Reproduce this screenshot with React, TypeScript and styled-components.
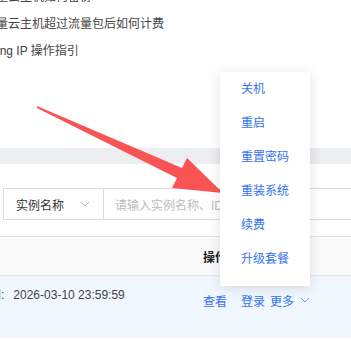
import styled, { createGlobalStyle } from 'styled-components';

const GlobalStyle = createGlobalStyle`
    html, body {
        margin: 0;
        padding: 0;
        background: #fff;
        overflow: hidden;
    }
    body {
        font-family: "Liberation Sans", "Noto Sans CJK SC", sans-serif;
        font-size: 12px;
        color: #333;
    }
`

const Page = styled.div`
    position: relative;
    width: 351px;
    height: 339px;
    overflow: hidden;
`

const HelpList = styled.ul`
    list-style: none;
    margin: -16px 0 0;
    padding: 0;
    height: 81px;
`

const HelpItem = styled.li<{ $shift: number }>`
    line-height: 27px;
    white-space: nowrap;
    color: #444;
    margin-left: ${p => p.$shift}px;
`

const Band = styled.div`
    margin-top: 83px;
    height: 16px;
    background: #ebedf1;
`

const Filter = styled.div`
    padding: 24px 0 16px 3px;
    border-bottom: 1px solid #e4e4e4;
`

const SearchBox = styled.div`
    display: flex;
    width: 420px;
    height: 30px;
    border: 1px solid #dcdcdc;
`

const SelectPart = styled.div`
    display: flex;
    align-items: center;
    justify-content: space-between;
    width: 100px;
    padding: 0 13px 0 12px;
    box-sizing: border-box;
    border-right: 1px solid #dcdcdc;
    color: #333;
`

const SearchInput = styled.div`
    display: flex;
    align-items: center;
    padding-left: 11px;
    color: #bbb;
    white-space: nowrap;
`

const HeadRow = styled.div`
    display: flex;
    align-items: center;
    height: 38px;
    padding-left: 203px;
    background: #fafafa;
    border-bottom: 1px solid #e6e6e6;
    font-weight: bold;
    color: #222;
`

const DataRow = styled.div`
    display: flex;
    height: 62px;
    background: #f0f7ff;
    margin-left: -47px;
`

const ExpireCell = styled.div`
    width: 250px;
    padding-top: 11px;
    line-height: 16px;
    color: #444;
    white-space: nowrap;
`

const DateText = styled.span`
    margin-left: 9px;
`

const Actions = styled.div`
    display: flex;
    align-items: center;
    height: 16px;
    margin-top: 16px;
    color: #3370f5;
    white-space: nowrap;
`

const Link = styled.span<{ $gap: number }>`
    margin-right: ${p => p.$gap}px;
`

const Menu = styled.ul`
    position: absolute;
    left: 220px;
    top: 72px;
    width: 90px;
    margin: 0;
    padding: 0 0 10px;
    list-style: none;
    background: #fff;
    box-shadow: 0 2px 12px rgba(0, 0, 0, 0.12);
    z-index: 2;
`

const MenuItem = styled.li`
    height: 34px;
    line-height: 34px;
    padding-left: 21px;
    color: #3370f5;
`

const Arrow = styled.svg`
    position: absolute;
    left: 0;
    top: 0;
    z-index: 1;
`

function Chevron({ color }: { color: string }) {
    return (
        <svg width="10" height="6" viewBox="0 0 10 6">
            <path d="M1 1 L5 5 L9 1" fill="none" stroke={color} strokeWidth="1" />
        </svg>
    );
}

const menuItems = ['关机', '重启', '重置密码', '重装系统', '续费', '升级套餐'];

function App() {
    return (
        <Page>
            <GlobalStyle />
            <HelpList>
                <HelpItem $shift={-16}>轻量云主机如何备份</HelpItem>
                <HelpItem $shift={-16}>轻量云主机超过流量包后如何计费</HelpItem>
                <HelpItem $shift={-11}>Ping IP 操作指引</HelpItem>
            </HelpList>
            <Band />
            <Filter>
                <SearchBox>
                    <SelectPart>
                        实例名称
                        <Chevron color="#bbb" />
                    </SelectPart>
                    <SearchInput>请输入实例名称、ID或IP进行搜索</SearchInput>
                </SearchBox>
            </Filter>
            <HeadRow>操作</HeadRow>
            <DataRow>
                <ExpireCell>
                    到期时间:<DateText>2026-03-10 23:59:59</DateText>
                </ExpireCell>
                <Actions>
                    <Link $gap={14}>查看</Link>
                    <Link $gap={5}>登录</Link>
                    <Link $gap={6}>更多</Link>
                    <Chevron color="#7a9cf0" />
                </Actions>
            </DataRow>
            <Arrow width="351" height="339" viewBox="0 0 351 339">
                <polygon
                    points="37,106 182,168 187,158 223,193 172,188 177,178 37,108"
                    fill="#f95454"
                />
            </Arrow>
            <Menu>
                {menuItems.map(item => (
                    <MenuItem key={item}>{item}</MenuItem>
                ))}
            </Menu>
        </Page>
    );
}

export default App;
